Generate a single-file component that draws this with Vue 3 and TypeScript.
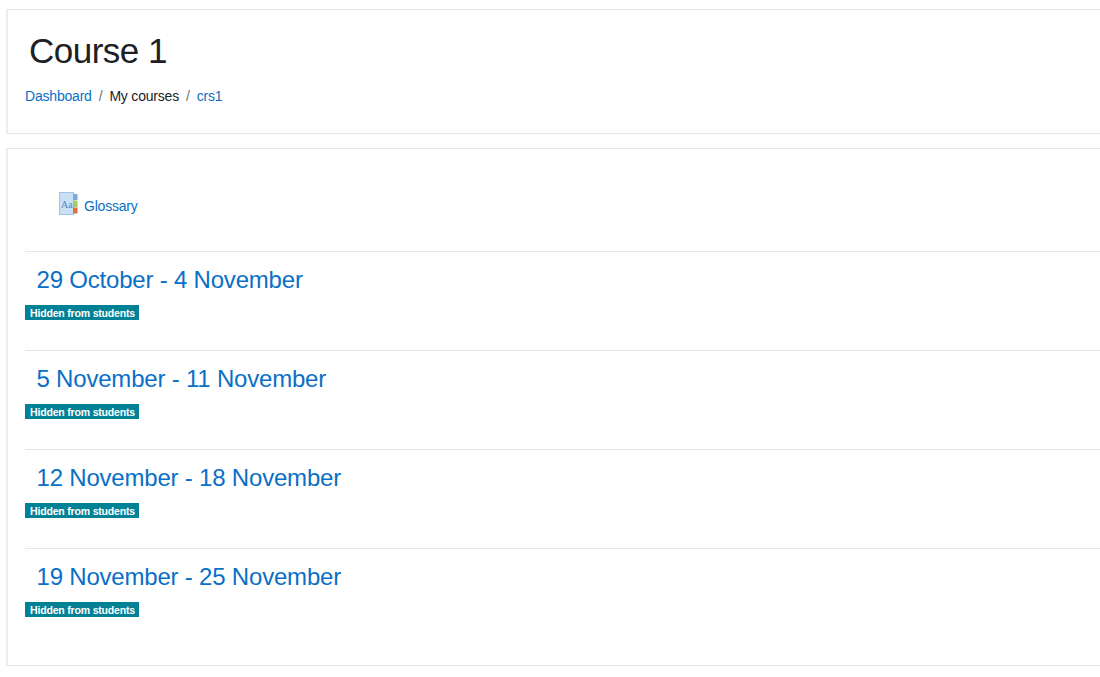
<script setup lang="ts">
const crumbs = [
  { label: 'Dashboard', link: true },
  { label: 'My courses', link: false },
  { label: 'crs1', link: true }
]

const weeks = [
  '29 October - 4 November',
  '5 November - 11 November',
  '12 November - 18 November',
  '19 November - 25 November'
]
</script>

<template>
  <div class="page">
    <header class="card page-header">
      <h1 class="course-title">Course 1</h1>
      <nav class="breadcrumb">
        <template v-for="(crumb, i) in crumbs" :key="crumb.label">
          <span v-if="i > 0" class="crumb-sep">/</span>
          <a v-if="crumb.link" class="link" href="#">{{ crumb.label }}</a>
          <span v-else class="crumb-text">{{ crumb.label }}</span>
        </template>
      </nav>
    </header>

    <main class="card course-content">
      <div class="activity">
        <svg class="activity-icon" width="19" height="24" viewBox="0 0 19 24">
          <rect x="0.5" y="0.5" width="14" height="22" fill="#c9e0f6" stroke="#9cc4ea" />
          <rect x="14" y="2" width="4.5" height="6" fill="#7ba9dc" />
          <rect x="14" y="8.5" width="4.5" height="6.5" fill="#a3cc62" />
          <rect x="14" y="15.5" width="4.5" height="6" fill="#e2703a" />
          <text x="2" y="15.5" class="icon-text">Aa</text>
        </svg>
        <a class="link activity-name" href="#">Glossary</a>
      </div>

      <section v-for="week in weeks" :key="week" class="week">
        <h3 class="week-title"><a class="week-link" href="#">{{ week }}</a></h3>
        <span class="badge">Hidden from students</span>
      </section>
    </main>
  </div>
</template>

<style>
html,
body {
  margin: 0;
  background: #fff;
}
</style>

<style scoped>
.page {
  width: 1100px;
  height: 677px;
  overflow: hidden;
  box-sizing: border-box;
  padding: 9px 0 0 6px;
  font-family: "Liberation Sans", Arial, sans-serif;
  font-size: 14px;
  letter-spacing: -0.2px;
  color: #1d2125;
}

.card {
  width: 1120px;
  box-sizing: border-box;
  background: #fff;
  border: 1px solid #e6e6e6;
  border-left: 2px solid #ececec;
}

.page-header {
  height: 125px;
  padding: 18px 17px 0;
  margin-bottom: 14px;
}

.course-title {
  margin: 0 0 0 4px;
  font-size: 35px;
  font-weight: 400;
  letter-spacing: -0.5px;
  line-height: 45px;
}

.breadcrumb {
  display: flex;
  align-items: center;
  margin-top: 13px;
  line-height: 21px;
}

.crumb-sep {
  padding: 0 7px;
  color: #6a737b;
}

.link {
  color: #0a6fc6;
  text-decoration: none;
}

.course-content {
  height: 518px;
  padding: 0 17px;
}

.activity {
  display: flex;
  align-items: flex-end;
  height: 102px;
  padding: 0 0 35px 34px;
  box-sizing: border-box;
}

.activity-icon {
  display: block;
  margin-right: 6px;
}

.icon-text {
  font-family: "Liberation Serif", serif;
  font-size: 10px;
  letter-spacing: 0;
  fill: #4f86c4;
}

.activity-name {
  line-height: 20px;
}

.week {
  height: 99px;
  box-sizing: border-box;
  border-top: 1px solid #e6e6e6;
  padding-top: 12px;
}

.week-title {
  margin: 0 0 10px 11.5px;
  font-size: 24px;
  font-weight: 400;
  letter-spacing: -0.2px;
  line-height: 31px;
}

.week-link {
  color: #0a6fc6;
  text-decoration: none;
}

.badge {
  display: block;
  width: 114px;
  height: 15px;
  box-sizing: border-box;
  padding-left: 5px;
  background: #008196;
  color: #fff;
  font-size: 10.55px;
  font-weight: 700;
  letter-spacing: -0.2px;
  line-height: 16px;
  white-space: nowrap;
}
</style>
